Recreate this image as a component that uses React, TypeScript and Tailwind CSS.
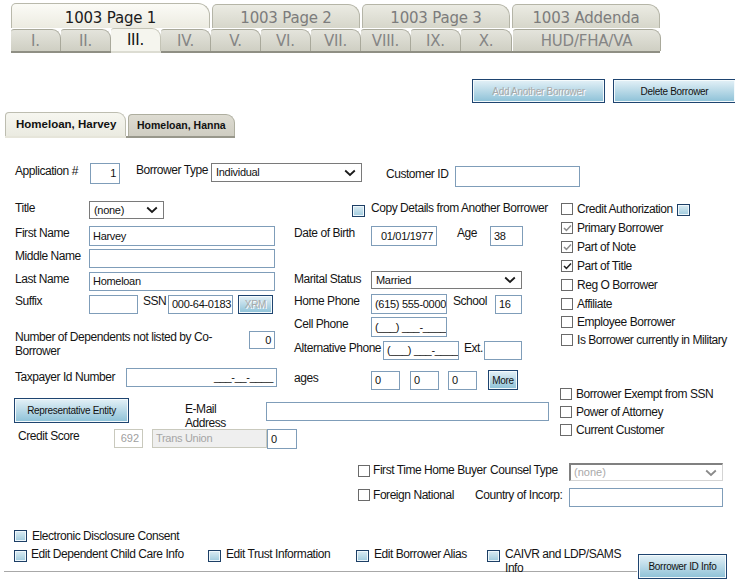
import React from "react";

type P = { c?: string; children?: React.ReactNode };

const Lbl = ({ c = "", children }: P) => (
  <div className={"text-[12px] leading-[14px] text-[#141414] tracking-[-0.45px] shrink-0 " + c}>{children}</div>
);

const Inp = ({ c = "", v = "", right = false }: { c?: string; v?: string; right?: boolean }) => (
  <div
    className={
      "border border-[#7f9db9] bg-white flex items-center px-[3px] text-[11px] tracking-[-0.3px] text-[#111] overflow-hidden whitespace-nowrap shrink-0 " +
      (right ? "justify-end " : "") +
      c
    }
  >
    {v}
  </div>
);

const Chev = ({ color = "#1a1a1a" }: { color?: string }) => (
  <svg width="12" height="8" viewBox="0 0 12 8">
    <path d="M1.2 1.5 L6 6 L10.8 1.5" stroke={color} strokeWidth="1.8" fill="none" />
  </svg>
);

const Sel = ({ c = "", v }: { c?: string; v: string }) => (
  <div
    className={
      "border border-[#7a7a7a] bg-white flex items-center justify-between pl-[4px] pr-[5px] text-[11px] tracking-[-0.3px] text-[#111] shrink-0 " +
      c
    }
  >
    <span>{v}</span>
    <Chev />
  </div>
);

const Cb = ({ checked = false, gray = false }: { checked?: boolean; gray?: boolean }) => (
  <div className="w-[12px] h-[12px] border border-[#6a6a6a] bg-white flex items-center justify-center shrink-0">
    {checked && (
      <svg width="9" height="8" viewBox="0 0 9 8">
        <path d="M1 4 L3.4 6.4 L8 1.4" stroke={gray ? "#8d8d8d" : "#222"} strokeWidth="1.5" fill="none" />
      </svg>
    )}
  </div>
);

const BlueSq = ({ c = "" }: { c?: string }) => (
  <div
    className={
      "w-[13px] h-[12px] border border-[#1d3f66] bg-linear-to-b from-[#dbecf3] to-[#9fcadd] shadow-[inset_0_0_0_1px_#eef7fb] shrink-0 " +
      c
    }
  />
);

const Btn = ({ c = "", children, dis = false }: P & { dis?: boolean }) => (
  <div
    className={
      "flex items-center justify-center border border-[#1e4470] bg-linear-to-b from-[#e4f1f7] to-[#8cc1d7] shadow-[inset_0_0_0_1px_#f4fafc] text-[10px] tracking-[-0.3px] whitespace-nowrap shrink-0 " +
      (dis ? "text-[#a9a9a9] [text-shadow:1px_1px_0_#ffffff] " : "text-[#111] ") +
      c
    }
  >
    {children}
  </div>
);

const CheckRow = ({ c = "", label, checked = false, gray = false, extra }: { c?: string; label: string; checked?: boolean; gray?: boolean; extra?: React.ReactNode }) => (
  <div className={"flex items-center " + c}>
    <Cb checked={checked} gray={gray} />
    <Lbl c="ml-[4px] whitespace-nowrap">{label}</Lbl>
    {extra}
  </div>
);

const topTabs = [
  { label: "1003 Page 1", w: "w-[199px]", active: true },
  { label: "1003 Page 2", w: "w-[148px]", active: false },
  { label: "1003 Page 3", w: "w-[148px]", active: false },
  { label: "1003 Addenda", w: "w-[148px]", active: false },
];

const subTabs = [
  { label: "I.", w: "w-[50px]", active: false },
  { label: "II.", w: "w-[50px]", active: false },
  { label: "III.", w: "w-[50px]", active: true },
  { label: "IV.", w: "w-[50px]", active: false },
  { label: "V.", w: "w-[50px]", active: false },
  { label: "VI.", w: "w-[50px]", active: false },
  { label: "VII.", w: "w-[50px]", active: false },
  { label: "VIII.", w: "w-[50px]", active: false },
  { label: "IX.", w: "w-[50px]", active: false },
  { label: "X.", w: "w-[51px]", active: false },
  { label: "HUD/FHA/VA", w: "w-[148px]", active: false },
];

export default function App() {
  return (
    <div className="w-[735px] h-[583px] bg-white overflow-hidden font-['Liberation_Sans',Arial,sans-serif] text-[#141414]">
      {/* Page tabs */}
      <div className="pt-[3px] pl-[11px] font-['DejaVu_Sans',Verdana,sans-serif]">
        <div className="flex items-end gap-[2px] h-[25px]">
          {topTabs.map((t) => (
            <div
              key={t.label}
              className={
                t.w +
                " flex items-center justify-center pt-[4px] text-[15px] tracking-[-0.2px] border border-b-0 rounded-tl-[5px] rounded-tr-[12px] " +
                (t.active
                  ? "h-[25px] bg-linear-to-b from-[#fbfbf6] to-[#ecebe1] border-[#b9b9ab] text-[#1c1c1c]"
                  : "h-[24px] bg-linear-to-b from-[#ebebe3] to-[#d6d6ca] border-[#b5b5a7] text-[#7c7c7c]")
              }
            >
              {t.label}
            </div>
          ))}
        </div>
        <div className="flex h-[23px] items-end">
          {subTabs.map((t, i) => (
            <div
              key={t.label}
              className={
                t.w +
                " flex items-center justify-center pt-[1px] text-[15px] tracking-[-0.2px] border-r border-t rounded-tr-[9px] rounded-tl-[3px] " +
                (i === 10 ? "ml-[1px] " : "") +
                (t.active
                  ? "h-[23px] bg-[#f5f5ee] border-[#c4c4b6] text-[#111]"
                  : "h-[22px] bg-linear-to-b from-[#e4e4dc] to-[#cfcfc3] border-[#a9a99b] text-[#858585]")
              }
            >
              {t.label}
            </div>
          ))}
        </div>
        <div className="flex h-[2px] w-[649px]">
          <div className="w-[100px] bg-[#8f8f84]" />
          <div className="w-[50px] bg-[#dcdcd2]" />
          <div className="flex-1 bg-[#8f8f84]" />
        </div>
      </div>

      {/* Borrower action buttons */}
      <div className="mt-[26px] flex justify-end gap-[8px]">
        <Btn c="w-[133px] h-[24px]" dis>
          Add Another Borrower
        </Btn>
        <Btn c="w-[122px] h-[24px] border-r-0">Delete Borrower</Btn>
      </div>

      {/* Borrower tabs */}
      <div className="mt-[9px] pl-[5px]">
        <div className="flex items-end gap-[2px]">
          <div className="w-[121px] h-[24px] pl-[10px] flex items-center text-[11.5px] font-bold text-[#111] bg-linear-to-b from-[#f6f6f0] to-[#ebebe1] border border-b-0 border-[#bdbdb0] rounded-tl-[4px] rounded-tr-[9px]">
            Homeloan, Harvey
          </div>
          <div className="w-[107px] h-[22px] pl-[8px] flex items-center text-[10.5px] font-bold text-[#111] bg-linear-to-b from-[#dedcd2] to-[#cfcdc2] border border-b-0 border-[#aeae9f] rounded-tl-[4px] rounded-tr-[9px]">
            Homeloan, Hanna
          </div>
        </div>
        <div className="flex h-[2px] w-[230px]">
          <div className="w-[121px] bg-[#e6e5da]" />
          <div className="flex-1 bg-[#98978b]" />
        </div>
      </div>

      {/* Row 1 */}
      <div className="mt-[25px] pl-[15px] flex items-start h-[23px]">
        <Lbl c="w-[75px] mt-[1px] whitespace-nowrap">Application #</Lbl>
        <Inp c="w-[30px] h-[21px]" v="1" right />
        <Lbl c="ml-[16px] w-[75px] mt-[0px] whitespace-nowrap">Borrower Type</Lbl>
        <Sel c="w-[151px] h-[19px]" v="Individual" />
        <Lbl c="ml-[24px] w-[69px] mt-[4px] whitespace-nowrap">Customer ID</Lbl>
        <Inp c="w-[125px] h-[21px] mt-[3px]" />
      </div>

      {/* Middle block */}
      <div className="mt-[15px] flex items-start">
        <div className="w-[559px] pl-[15px] flex flex-col">
          {/* Title */}
          <div className="flex items-start h-[18px]">
            <Lbl c="w-[74px] mt-[0px]">Title</Lbl>
            <Sel c="w-[75px] h-[18px]" v="(none)" />
            <BlueSq c="ml-[188px] mt-[4px]" />
            <Lbl c="ml-[6px] mt-[0px] whitespace-nowrap">Copy Details from Another Borrower</Lbl>
          </div>
          {/* First name */}
          <div className="mt-[7px] flex items-start h-[20px]">
            <Lbl c="w-[74px] mt-[0px]">First Name</Lbl>
            <Inp c="w-[186px] h-[20px]" v="Harvey" />
            <Lbl c="ml-[19px] w-[77px] whitespace-nowrap">Date of Birth</Lbl>
            <Inp c="w-[66px] h-[20px]" v="01/01/1977" right />
            <Lbl c="ml-[20px] w-[33px]">Age</Lbl>
            <Inp c="w-[33px] h-[20px]" v="38" />
          </div>
          {/* Middle name */}
          <div className="mt-[3px] flex items-start h-[20px]">
            <Lbl c="w-[74px] whitespace-nowrap">Middle Name</Lbl>
            <Inp c="w-[186px] h-[19px]" />
          </div>
          {/* Last name */}
          <div className="mt-[3px] flex items-start h-[20px]">
            <Lbl c="w-[74px] whitespace-nowrap">Last Name</Lbl>
            <Inp c="w-[186px] h-[19px]" v="Homeloan" />
            <Lbl c="ml-[19px] w-[77px] whitespace-nowrap">Marital Status</Lbl>
            <Sel c="w-[151px] h-[18px] -mt-[1px]" v="Married" />
          </div>
          {/* Suffix */}
          <div className="mt-[2px] flex items-start h-[20px]">
            <Lbl c="w-[74px]">Suffix</Lbl>
            <Inp c="w-[49px] h-[19px] mt-[1px]" />
            <Lbl c="ml-[5px] w-[25px]">SSN</Lbl>
            <Inp c="w-[65px] h-[19px] mt-[1px]" v="000-64-0183" />
            <Btn c="ml-[5px] w-[35px] h-[19px] mt-[1px] text-[9px]" dis>
              XRM
            </Btn>
            <Lbl c="ml-[21px] w-[77px] whitespace-nowrap">Home Phone</Lbl>
            <Inp c="w-[76px] h-[20px]" v="(615) 555-0000" />
            <Lbl c="ml-[6px] w-[42px]">School</Lbl>
            <Inp c="w-[27px] h-[19px] mt-[1px]" v="16" />
          </div>
          {/* Dependents / phones */}
          <div className="mt-[3px] flex items-start">
            <div className="w-[279px] flex items-start pt-[13px]">
              <Lbl c="w-[234px] leading-[13px]">Number of Dependents not listed by Co-Borrower</Lbl>
              <Inp c="w-[26px] h-[18px] mt-[1px]" v="0" right />
            </div>
            <div className="flex flex-col">
              <div className="flex items-start h-[20px]">
                <Lbl c="w-[77px] whitespace-nowrap">Cell Phone</Lbl>
                <Inp c="w-[76px] h-[20px]" v="(___) ___-____" />
              </div>
              <div className="mt-[4px] flex items-start h-[19px]">
                <Lbl c="w-[89px] whitespace-nowrap">Alternative Phone</Lbl>
                <Inp c="w-[76px] h-[19px]" v="(___) ___-____" />
                <Lbl c="ml-[5px] w-[20px]">Ext.</Lbl>
                <Inp c="w-[38px] h-[19px]" />
              </div>
            </div>
          </div>
          {/* Taxpayer / ages */}
          <div className="mt-[8px] flex items-start h-[23px]">
            <Lbl c="w-[111px] mt-[2px] whitespace-nowrap">Taxpayer Id Number</Lbl>
            <Inp c="w-[151px] h-[19px]" v="___-__-____" right />
            <Lbl c="ml-[17px] w-[77px] mt-[3px]">ages</Lbl>
            <Inp c="w-[29px] h-[19px] mt-[3px]" v="0" />
            <Inp c="ml-[10px] w-[29px] h-[19px] mt-[3px]" v="0" />
            <Inp c="ml-[9px] w-[29px] h-[19px] mt-[3px]" v="0" />
            <Btn c="ml-[11px] w-[30px] h-[20px] mt-[2px]">More</Btn>
          </div>
          {/* Representative / email */}
          <div className="mt-[7px] -ml-[1px] flex items-start h-[25px]">
            <Btn c="w-[115px] h-[25px]">Representative Entity</Btn>
            <Lbl c="ml-[56px] w-[81px] pr-[28px] mt-[4px] leading-[13px]">E-Mail Address</Lbl>
            <Inp c="w-[283px] h-[19px] mt-[4px]" />
          </div>
          {/* Credit score */}
          <div className="mt-[6px] flex items-start h-[20px]">
            <Lbl c="ml-[3px] w-[96px] whitespace-nowrap">Credit Score</Lbl>
            <div className="w-[29px] h-[19px] border border-[#c9c9bd] bg-white flex items-center justify-end px-[3px] text-[11px] text-[#a0a0a0] shrink-0">
              692
            </div>
            <div className="ml-[9px] w-[115px] h-[19px] border border-[#c9c9bd] bg-[#efefef] flex items-center px-[3px] text-[11px] tracking-[-0.3px] text-[#a5a5a5] shrink-0">
              Trans Union
            </div>
            <Inp c="w-[30px] h-[20px]" v="0" />
          </div>
        </div>

        {/* Right checkbox column */}
        <div className="flex flex-col pl-[2px] -mt-[2px]">
          <CheckRow c="h-[19px]" label="Credit Authorization" extra={<BlueSq c="ml-[4px] mt-[2px]" />} />
          <CheckRow c="h-[19px]" label="Primary Borrower" checked gray />
          <CheckRow c="h-[19px]" label="Part of Note" checked gray />
          <CheckRow c="h-[19px]" label="Part of Title" checked />
          <CheckRow c="h-[20px]" label="Reg O Borrower" />
          <CheckRow c="h-[18px]" label="Affiliate" />
          <CheckRow c="h-[18px]" label="Employee Borrower" />
          <CheckRow c="h-[18px]" label="Is Borrower currently in Military" />
          <CheckRow c="mt-[36px] h-[18px] -ml-[1px]" label="Borrower Exempt from SSN" />
          <CheckRow c="h-[18px] -ml-[1px]" label="Power of Attorney" />
          <CheckRow c="h-[18px] -ml-[1px]" label="Current Customer" />
        </div>
      </div>

      {/* First time home buyer */}
      <div className="mt-[14px] pl-[358px] flex items-start h-[18px]">
        <div className="mt-[2px]">
          <Cb />
        </div>
        <Lbl c="ml-[3px] w-[117px] mt-[0px] whitespace-nowrap">First Time Home Buyer</Lbl>
        <Lbl c="w-[79px] mt-[0px] whitespace-nowrap">Counsel Type</Lbl>
        <div className="w-[154px] h-[18px] border-t-2 border-l-2 border-r border-b border-t-[#808080] border-l-[#808080] border-r-[#d4d4d4] border-b-[#d4d4d4] bg-white flex items-center justify-between pl-[3px] pr-[5px] text-[11px] text-[#a9a9a9] shrink-0">
          <span>(none)</span>
          <Chev color="#8a8a8a" />
        </div>
      </div>
      <div className="mt-[7px] pl-[358px] flex items-start h-[19px]">
        <div className="mt-[1px]">
          <Cb />
        </div>
        <Lbl c="ml-[3px] w-[102px] mt-[0px] whitespace-nowrap">Foreign National</Lbl>
        <Lbl c="w-[94px] whitespace-nowrap">Country of Incorp:</Lbl>
        <Inp c="w-[154px] h-[19px]" />
      </div>

      {/* Bottom links */}
      <div className="mt-[21px] pl-[14px] flex items-center h-[15px]">
        <BlueSq />
        <Lbl c="ml-[5px] whitespace-nowrap">Electronic Disclosure Consent</Lbl>
      </div>
      <div className="mt-[4px] flex items-start">
        <div className="ml-[4px] w-[633px] h-[25px] border-b border-[#a8a8a8] pl-[10px] flex items-start">
          <div className="w-[194px] flex items-start">
            <BlueSq c="mt-[3px]" />
            <Lbl c="ml-[4px] whitespace-nowrap">Edit Dependent Child Care Info</Lbl>
          </div>
          <div className="w-[148px] flex items-start">
            <BlueSq c="mt-[3px]" />
            <Lbl c="ml-[5px] whitespace-nowrap">Edit Trust Information</Lbl>
          </div>
          <div className="w-[131px] flex items-start">
            <BlueSq c="mt-[3px]" />
            <Lbl c="ml-[5px] whitespace-nowrap">Edit Borrower Alias</Lbl>
          </div>
          <div className="flex items-start">
            <BlueSq c="mt-[3px]" />
            <Lbl c="ml-[5px] w-[118px] leading-[14px]">CAIVR and LDP/SAMS Info</Lbl>
          </div>
        </div>
        <Btn c="ml-[1px] mt-[7px] w-[89px] h-[25px]">Borrower ID Info</Btn>
      </div>
    </div>
  );
}
